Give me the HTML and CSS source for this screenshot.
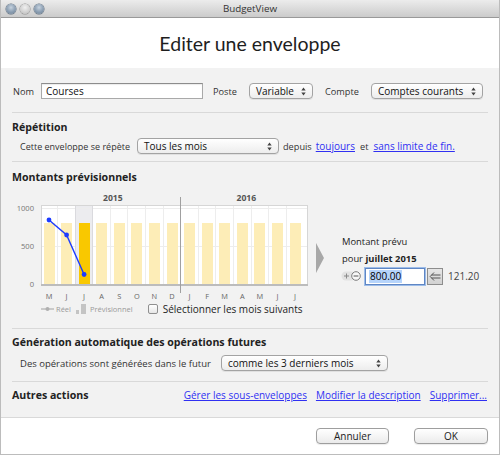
FILE: index.html
```html
<!DOCTYPE html>
<html lang="fr">
<head>
<meta charset="utf-8">
<title>BudgetView</title>
<link rel="stylesheet" href="styles.css">
</head>
<body>
<div class="window">
  <div class="titlebar">
    <div class="lights"><span class="light on"></span><span class="light off"></span><span class="light on"></span></div>
    <div class="wtitle">BudgetView</div>
    <div></div>
  </div>
  <div class="header"><h1>Editer une enveloppe</h1></div>
  <div class="main">
    <div class="sec sec-a">
      <div class="row r1">
        <span class="lbl l-nom">Nom</span>
        <div class="input in-nom">Courses</div>
        <span class="lbl l-poste">Poste</span>
        <div class="select s-var"><span>Variable</span><svg class="updown" width="5" height="9" viewBox="0 0 5 9"><path d="M0.3 3.6L2.5 0.6L4.7 3.6Z M0.3 5.4L2.5 8.4L4.7 5.4Z" fill="#444"/></svg></div>
        <span class="lbl l-compte">Compte</span>
        <div class="select s-cpt"><span>Comptes courants</span><svg class="updown" width="5" height="9" viewBox="0 0 5 9"><path d="M0.3 3.6L2.5 0.6L4.7 3.6Z M0.3 5.4L2.5 8.4L4.7 5.4Z" fill="#444"/></svg></div>
      </div>
    </div>

    <div class="sec sec-b">
      <h2>Répétition</h2>
      <div class="row r2">
        <span class="lbl l-rep">Cette enveloppe se répète</span>
        <div class="select s-tous"><span>Tous les mois</span><svg class="updown" width="5" height="9" viewBox="0 0 5 9"><path d="M0.3 3.6L2.5 0.6L4.7 3.6Z M0.3 5.4L2.5 8.4L4.7 5.4Z" fill="#444"/></svg></div>
        <span class="lbl l-depuis">depuis</span>
        <a class="link" href="#">toujours</a>
        <span class="lbl l-et">et</span>
        <a class="link" href="#">sans limite de fin.</a>
      </div>
    </div>

    <div class="sec sec-c">
      <h2>Montants prévisionnels</h2>
      <div class="chart-row">
        <svg class="chart" width="300" height="112" viewBox="0 0 300 112">
          <rect x="29.5" y="16.5" width="266" height="79" fill="#ffffff" stroke="#d6d6d6"/>
          <rect x="64" y="17" width="17" height="78" fill="#ececef"/>
          <g stroke="#ededed" stroke-width="1">
            <line x1="30" y1="19.5" x2="295" y2="19.5"/>
            <line x1="30" y1="57.5" x2="295" y2="57.5"/>
            <line x1="45.5" y1="17" x2="45.5" y2="95"/>
            <line x1="98.5" y1="17" x2="98.5" y2="95"/>
            <line x1="115.5" y1="17" x2="115.5" y2="95"/>
            <line x1="133.5" y1="17" x2="133.5" y2="95"/>
            <line x1="151.5" y1="17" x2="151.5" y2="95"/>
            <line x1="186.5" y1="17" x2="186.5" y2="95"/>
            <line x1="203.5" y1="17" x2="203.5" y2="95"/>
            <line x1="221.5" y1="17" x2="221.5" y2="95"/>
            <line x1="239.5" y1="17" x2="239.5" y2="95"/>
            <line x1="256.5" y1="17" x2="256.5" y2="95"/>
            <line x1="274.5" y1="17" x2="274.5" y2="95"/>
          </g>
          <g stroke="#dadade" stroke-width="1">
            <line x1="63.5" y1="17" x2="63.5" y2="95"/>
            <line x1="80.5" y1="17" x2="80.5" y2="95"/>
          </g>
          <g fill="#fdedb7">
            <rect x="32" y="34" width="11" height="61"/>
            <rect x="49" y="34" width="11" height="61"/>
            <rect x="84" y="34" width="11" height="61"/>
            <rect x="102" y="34" width="11" height="61"/>
            <rect x="119" y="34" width="11" height="61"/>
            <rect x="137" y="34" width="11" height="61"/>
            <rect x="155" y="34" width="11" height="61"/>
            <rect x="172" y="34" width="11" height="61"/>
            <rect x="190" y="34" width="11" height="61"/>
            <rect x="207" y="34" width="11" height="61"/>
            <rect x="225" y="34" width="11" height="61"/>
            <rect x="242" y="34" width="11" height="61"/>
            <rect x="260" y="34" width="11" height="61"/>
            <rect x="278" y="34" width="11" height="61"/>
          </g>
          <rect x="67" y="34" width="11" height="61" fill="#f9c800"/>
          <rect x="29" y="95" width="267" height="2" fill="#bcbcbc"/>
          <line x1="168.5" y1="8" x2="168.5" y2="104" stroke="#a0a0a0"/>
          <polyline points="37,31 54.6,46 72.1,85.5" fill="none" stroke="#1d3cff" stroke-width="1.4"/>
          <g fill="#1d3cff">
            <circle cx="37" cy="31" r="2.4"/>
            <circle cx="54.6" cy="46" r="2.4"/>
            <circle cx="72.1" cy="85.5" r="2.4"/>
          </g>
          <g class="ylab">
            <text x="22" y="22.2">1000</text>
            <text x="22" y="60.2">500</text>
            <text x="22" y="98.2">0</text>
          </g>
          <g class="year">
            <text x="100.8" y="12">2015</text>
            <text x="234.3" y="12">2016</text>
          </g>
          <g class="month">
            <text x="37" y="110">M</text>
            <text x="54.6" y="110">J</text>
            <text x="72.1" y="110">J</text>
            <text x="89.7" y="110">A</text>
            <text x="107.3" y="110">S</text>
            <text x="124.9" y="110">O</text>
            <text x="142.4" y="110">N</text>
            <text x="160" y="110">D</text>
            <text x="177.6" y="110">J</text>
            <text x="195.1" y="110">F</text>
            <text x="212.7" y="110">M</text>
            <text x="230.3" y="110">A</text>
            <text x="247.8" y="110">M</text>
            <text x="265.4" y="110">J</text>
            <text x="283" y="110">J</text>
          </g>
        </svg>
        <svg class="tri" width="8" height="30" viewBox="0 0 8 30"><path d="M0 0L8 15L0 30Z" fill="#a8a8a8"/></svg>
        <div class="forecast">
          <div class="fline">Montant prévu</div>
          <div class="fline">pour <b>juillet 2015</b></div>
          <div class="controls">
            <svg class="pm" width="20" height="12" viewBox="0 0 20 12">
              <rect x="0.5" y="1.5" width="14" height="9" rx="4.5" fill="#e2e2e2"/>
              <path d="M3 6H8M5.5 3.5V8.5" stroke="#8a8a8a" stroke-width="1"/>
              <circle cx="15" cy="6" r="4.3" fill="#f7f7f7" stroke="#7c7c7c" stroke-width="1"/>
              <path d="M12.6 6H17.4" stroke="#555" stroke-width="1"/>
            </svg>
            <div class="amount"><span class="sel">800.00</span></div>
            <div class="back"><svg width="12" height="11" viewBox="0 0 12 11"><path d="M5 1.5L1.2 5.5L5 9.5M2.5 4H11.5M2.5 7H11.5" fill="none" stroke="#555" stroke-width="1"/></svg></div>
            <span class="real">121.20</span>
          </div>
        </div>
      </div>
      <div class="legend">
        <svg class="lg-line" width="13" height="6" viewBox="0 0 13 6"><path d="M0 3H13" stroke="#b0b0b0" stroke-width="1.2"/><circle cx="6.5" cy="3" r="2" fill="#b0b0b0"/></svg>
        <span class="lg-txt lg-reel">Réel</span>
        <svg class="lg-bar" width="11" height="10" viewBox="0 0 11 10"><rect x="0" y="6" width="3" height="4" fill="#c4c4c4"/><rect x="5" y="0" width="5" height="10" fill="#c4c4c4"/></svg>
        <span class="lg-txt lg-prev">Prévisionnel</span>
        <span class="checkbox"></span>
        <span class="cb-label">Sélectionner les mois suivants</span>
      </div>
    </div>

    <div class="sec sec-d">
      <h2>Génération automatique des opérations futures</h2>
      <div class="row r4">
        <span class="lbl l-gen">Des opérations sont générées dans le futur</span>
        <div class="select s-comme"><span>comme les 3 derniers mois</span><svg class="updown" width="5" height="9" viewBox="0 0 5 9"><path d="M0.3 3.6L2.5 0.6L4.7 3.6Z M0.3 5.4L2.5 8.4L4.7 5.4Z" fill="#444"/></svg></div>
      </div>
    </div>

    <div class="sec sec-e">
      <div class="row r5">
        <h2>Autres actions</h2>
        <div class="actions">
          <a class="link" href="#">Gérer les sous-enveloppes</a>
          <a class="link" href="#">Modifier la description</a>
          <a class="link" href="#">Supprimer...</a>
        </div>
      </div>
    </div>
  </div>
  <div class="footer">
    <button class="btn btn-cancel">Annuler</button>
    <button class="btn btn-ok">OK</button>
  </div>
</div>
</body>
</html>
```

FILE: styles.css
```css
* { box-sizing: border-box; margin: 0; padding: 0; }
html, body { width: 500px; height: 455px; overflow: hidden; background: #ffffff; }
body { font-family: "Open Sans", "DejaVu Sans", sans-serif; color: #333; }

.window {
  width: 500px; height: 455px;
  border: 1px solid #bcbcbc; border-top: none;
  display: flex; flex-direction: column;
}

.titlebar {
  height: 18px; flex: none;
  border-bottom: 1px solid #999;
  background: linear-gradient(#ececec, #cbcbcb);
  display: grid; grid-template-columns: 1fr auto 1fr; align-items: center;
}
.lights { display: flex; gap: 4px; padding-left: 5px; }
.light { width: 10px; height: 10px; border-radius: 50%; }
.light.on { background: radial-gradient(circle at 50% 35%, #c7d3df 0%, #8a9db1 55%, #6b7f94 100%); box-shadow: 0 0 0 0.5px #5b6b7c; }
.light.off { background: radial-gradient(circle at 50% 35%, #f0f0f0 0%, #cfcfcf 60%, #b5b5b5 100%); box-shadow: 0 0 0 0.5px #8e8e8e; }
.wtitle { font-size: 9.8px; color: #333; line-height: 17px; }

.header { height: 50px; flex: none; background: #fff; padding-top: 14px; text-align: center; }
.header h1 { font-family: Lato, "Open Sans", sans-serif; font-weight: 400; font-size: 19.5px; line-height: 24px; color: #1e1e1e; }

.main {
  height: 350px; flex: none;
  background: #f2f2f2;
  border-bottom: 1px solid #d9d9d9;
  padding: 0 11px;
}
.sec { border-bottom: 1px solid #d9d9d9; }
.sec-e { border-bottom: none; }

h2 { font-size: 10.6px; font-weight: 700; line-height: 14px; color: #222; }

.row { display: flex; align-items: center; }
.lbl { font-size: 9.2px; color: #333; white-space: nowrap; }
.link { font-size: 10px; color: #3030f2; text-decoration: underline; white-space: nowrap; }

.select {
  height: 16px;
  border: 1px solid #a3a3a3; border-radius: 4px;
  background: linear-gradient(#ffffff, #ededed);
  box-shadow: 0 1px 0 rgba(0,0,0,0.07);
  display: flex; align-items: center; justify-content: space-between;
  padding: 0 6px 0 6px;
  font-size: 10px; color: #111; white-space: nowrap;
}
.input {
  height: 16px;
  border: 1px solid #a9a9a9; border-top-color: #8c8c8c;
  background: #fff;
  box-shadow: inset 0 1px 1px rgba(0,0,0,0.08);
  font-size: 10px; color: #111; line-height: 14px;
  padding-left: 4px;
}

/* section A */
.sec-a { padding: 12px 0 10px; }
.r1 { height: 22px; }
.l-nom { width: 29px; padding-left: 1px; }
.in-nom { width: 162px; }
.l-poste { width: 36px; margin-left: 10px; }
.s-var { width: 64px; }
.l-compte { width: 46px; margin-left: 12px; }
.s-cpt { width: 112px; }

/* section B */
.sec-b { padding: 7px 0 6px; }
.r2 { height: 18px; margin-top: 3px; }
.l-rep { width: 125px; padding-left: 8px; font-size: 9px; }
.s-tous { width: 142px; }
.l-depuis { margin-left: 4px; margin-right: 4px; }
.l-et { margin: 0 5px; }

/* section C */
.sec-c { padding: 8px 0 11px; }
.chart-row { display: flex; align-items: flex-start; margin-top: 5px; height: 112px; }
.chart { display: block; flex: none; }
.chart text { font-family: "Open Sans", "DejaVu Sans", sans-serif; }
.ylab text { font-size: 7.6px; fill: #777; text-anchor: end; }
.year text { font-size: 8.6px; font-weight: 700; fill: #555; text-anchor: middle; }
.month text { font-size: 7.4px; fill: #666; text-anchor: middle; }
.tri { display: block; flex: none; margin-left: 4px; margin-top: 54px; }
.forecast { margin-left: 18px; padding-top: 44px; }
.fline { font-size: 9.4px; line-height: 17px; color: #222; white-space: nowrap; }
.fline b { font-weight: 700; }
.controls { display: flex; align-items: center; height: 18px; }
.pm { display: block; flex: none; margin-left: -1px; }
.amount {
  width: 60px; height: 17px; margin-left: 4px;
  background: #fff;
  border: 1px solid #5f86c4;
  box-shadow: 0 0 0 1px #9dbde9;
  padding-left: 3px;
  display: flex; align-items: center;
}
.amount .sel { background: #b6d4fb; font-size: 10px; color: #000; line-height: 13px; padding: 0 1px; }
.back {
  width: 16px; height: 17px; margin-left: 2px;
  background: linear-gradient(#e6e6e6, #d2d2d2);
  border: 1px solid #8d8d8d;
  display: flex; align-items: center; justify-content: center;
}
.real { font-size: 10px; color: #444; margin-left: 5px; }

.legend { display: flex; align-items: center; height: 16px; padding-left: 29px; }
.lg-line, .lg-bar { display: block; flex: none; }
.lg-txt { font-size: 7.5px; color: #9a9a9a; }
.lg-reel { margin-left: 2px; }
.lg-bar { margin-left: 5px; }
.lg-prev { margin-left: 3px; }
.checkbox {
  width: 10px; height: 10px; margin-left: 15px;
  border: 1px solid #8f8f8f; border-radius: 2px;
  background: linear-gradient(#ffffff, #e6e6e6);
}
.cb-label { font-size: 10px; color: #222; margin-left: 5px; white-space: nowrap; }

/* section D */
.sec-d { padding: 6px 0 9px; }
.r4 { height: 18px; margin-top: 5px; }
.l-gen { width: 209px; padding-left: 8px; font-size: 9.5px; }
.s-comme { width: 167px; }

/* section E */
.sec-e { padding-top: 6px; }
.r5 { height: 14px; }
.actions { margin-left: auto; display: flex; gap: 9px; padding-right: 1px; }

/* footer */
.footer {
  flex: 1; background: #fff;
  display: flex; justify-content: flex-end; align-items: center;
  gap: 25px; padding-right: 11px;
}
.btn {
  height: 16px;
  border: 1px solid #9e9e9e; border-radius: 4px;
  background: linear-gradient(#ffffff, #ebebeb);
  box-shadow: 0 1px 1px rgba(0,0,0,0.08);
  font-family: "Open Sans", "DejaVu Sans", sans-serif;
  font-size: 10px; color: #222; line-height: 14px;
}
.btn-cancel { width: 73px; }
.btn-ok { width: 74px; }
```
